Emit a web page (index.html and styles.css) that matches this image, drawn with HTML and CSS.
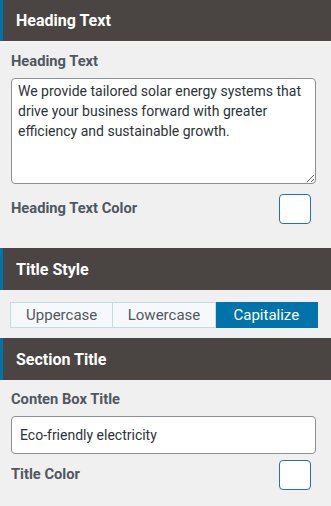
FILE: index.html
```html
<!DOCTYPE html>
<html lang="en">
<head>
    <meta charset="UTF-8">
    <meta name="viewport" content="width=device-width, initial-scale=1.0">
    <title>Panel</title>
    <link rel="stylesheet" href="styles.css">
</head>
<body>
    <div class="panel">
        <div class="panel-head">Heading Text</div>
        <div class="panel-body first">
            <label class="field-label">Heading Text</label>
            <textarea class="text-area">We provide tailored solar energy systems that drive your business forward with greater efficiency and sustainable growth.</textarea>
            <div class="color-row">
                <span class="field-label">Heading Text Color</span>
                <span class="swatch"></span>
            </div>
        </div>

        <div class="panel-head">Title Style</div>
        <div class="panel-body buttons-body">
            <div class="btn-group">
                <button class="btn">Uppercase</button>
                <button class="btn">Lowercase</button>
                <button class="btn active">Capitalize</button>
            </div>
        </div>

        <div class="panel-head">Section Title</div>
        <div class="panel-body last">
            <label class="field-label">Conten Box Title</label>
            <input class="text-input" type="text" value="Eco-friendly electricity">
            <div class="color-row small">
                <span class="field-label">Title Color</span>
                <span class="swatch"></span>
            </div>
        </div>
    </div>
</body>
</html>
```

FILE: styles.css
```css
*{
    margin: 0;
    padding: 0;
    box-sizing: border-box;
}

body{
    width: 331px;
    height: 506px;
    overflow: hidden;
    background: #f0f0f0;
    font-family: Roboto, "Liberation Sans", sans-serif;
}

.panel-head{
    height: 42px;
    display: flex;
    align-items: center;
    padding-left: 13px;
    background: #4a4542;
    border-left: 3px solid #0073aa;
    color: #fff;
    font-size: 16px;
    font-weight: 700;
}

.panel-head:first-child{
    height: 41px;
}

.panel-body{
    padding: 9px 15px 0 11px;
}

.panel-body.first{
    border-top: 1px solid #f7f7f7;
    height: 207px;
}

.field-label{
    display: block;
    font-size: 14.7px;
    line-height: 20px;
    font-weight: 700;
    color: #50575e;
}

.text-area{
    display: block;
    width: 100%;
    height: 106px;
    margin-top: 7px;
    padding: 2px 6px;
    border: 1px solid #8c8f94;
    border-radius: 4px;
    background: #fff;
    font-family: Roboto, "Liberation Sans", sans-serif;
    font-size: 14px;
    line-height: 20px;
    color: #2c3338;
    resize: vertical;
}

.color-row{
    display: flex;
    align-items: center;
    justify-content: space-between;
    margin-top: 10px;
    padding-right: 5px;
}

.color-row .field-label{
    margin-top: -3px;
}

.color-row.small{
    margin-top: 6px;
}

.swatch{
    width: 32px;
    height: 30px;
    border: 1px solid #2271b1;
    border-radius: 4px;
    background: #fff;
}

.buttons-body{
    padding: 12px 13px 10px 10px;
}

.btn-group{
    display: flex;
    height: 26px;
}

.btn{
    flex: 1;
    border: 1px solid #c5d9ed;
    border-left: 0;
    background: #f6f9fc;
    font-family: Roboto, "Liberation Sans", sans-serif;
    font-size: 15px;
    color: #50575e;
}

.btn:first-child{
    border-left: 1px solid #c5d9ed;
}

.btn.active{
    background: #0073aa;
    border-color: #0073aa;
    color: #fff;
}

.text-input{
    display: block;
    width: 100%;
    height: 38px;
    margin-top: 7px;
    padding: 0 8px;
    border: 1px solid #8c8f94;
    border-radius: 4px;
    background: #fff;
    font-family: Roboto, "Liberation Sans", sans-serif;
    font-size: 14px;
    color: #2c3338;
}
```
